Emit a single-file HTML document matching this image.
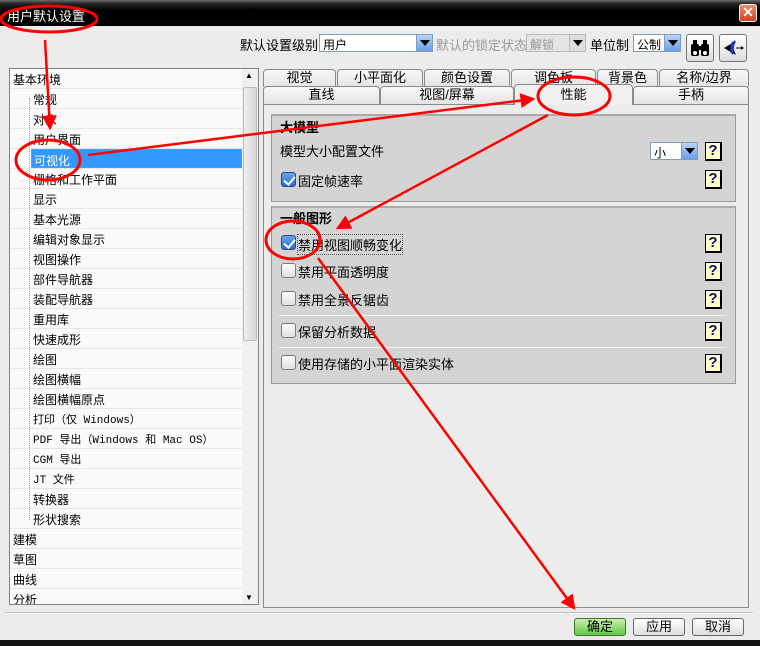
<!DOCTYPE html>
<html><head><meta charset="utf-8"><style>
*{box-sizing:border-box;margin:0;padding:0}
body{width:760px;height:646px;background:#ececec;position:relative;overflow:hidden;font-family:"Liberation Sans","Noto Sans CJK SC","WenQuanYi Zen Hei",sans-serif;font-size:12px;color:#000}
.a{position:absolute}
.title{left:0;top:0;width:760px;height:26px;background:linear-gradient(#6a6a6a,#222 15%,#000 40%,#000);color:#fff;font-size:13px;padding:6px 0 0 7px}
.close{left:739px;top:4px;width:18px;height:18px;background:linear-gradient(#f08a6a,#d04020);border:1px solid #fff;border-radius:3px;color:#fff;font-size:14px;line-height:15px;text-align:center;font-weight:bold}
.combo{background:#fff;border:1px solid #7f9db9;height:18px;padding:1px 3px}
.dd{position:absolute;right:0;top:0;width:16px;height:16px;background:linear-gradient(#b8d4f8,#6a9ee8);border-left:1px solid #7f9db9}
.dd:after{content:"";position:absolute;left:3px;top:5px;border-left:5px solid transparent;border-right:5px solid transparent;border-top:6px solid #000}
.tree{left:9px;top:68px;width:250px;height:537px;border:1px solid #828282;background:#fff;overflow:hidden}
.row{position:absolute;left:0;width:232px;height:20px;border-bottom:1px solid #e6e6e6;padding:2px 0 0 3px;font-size:12px;background:#fafafa}
.row.c{padding-left:23px}
.sb{position:absolute;right:0;top:0;width:16px;height:535px;background:#f0f0f0}
.tab{position:absolute;height:18px;border:1px solid #8a8a8a;border-bottom:none;border-radius:4px 4px 0 0;background:linear-gradient(#f8f8f8,#e4e4e4);text-align:center;font-size:13px;line-height:16px}
.panel{left:263px;top:104px;width:486px;height:504px;border:1px solid #8a8a8a;background:#ececec}
.grp{position:absolute;left:271px;width:465px;background:#d4d4d4;border:1px solid #999;border-top:2px solid #aaa}
.lbl{position:absolute;font-size:13px}
.cb{position:absolute;width:15px;height:15px;border:1px solid #7a7a7a;border-radius:3px;background:linear-gradient(#fff,#ddd)}
.cb.on{background:linear-gradient(#6aa6ee,#2a6ad6);border-color:#2a4a8a}
.cb.on:after{content:"";position:absolute;left:4px;top:1px;width:5px;height:9px;border:solid #fff;border-width:0 2px 2px 0;transform:rotate(40deg)}
.q{position:absolute;left:705px;width:17px;height:19px;background:#ffffcc;border:1px solid #000;border-width:1px 2px 2px 1px;color:#0a0a80;font-weight:bold;font-size:15px;line-height:16px;text-align:center}
.btn{position:absolute;top:618px;width:52px;height:18px;border:1px solid #666;border-radius:3px;background:linear-gradient(#fff,#ddd);text-align:center;font-size:13px;line-height:16px}
.ib{position:absolute;top:34px;width:28px;height:28px;border:1px solid #777;border-radius:3px;background:linear-gradient(#fff,#ddd)}
</style></head><body>
<div class="a title">用户默认设置</div>
<div class="a close">✕</div>

<div class="a" style="left:240px;top:35px;font-size:13px">默认设置级别</div>
<div class="a combo" style="left:319px;top:34px;width:114px">用户<div class="dd"></div></div>
<div class="a" style="left:436px;top:35px;font-size:13px;color:#999">默认的锁定状态</div>
<div class="a combo" style="left:526px;top:34px;width:60px;background:#e4e4e4;color:#999;border-color:#bbb">解锁<div class="dd" style="background:#ddd;border-color:#bbb"></div></div>
<div class="a" style="left:590px;top:35px;font-size:13px">单位制</div>
<div class="a combo" style="left:633px;top:34px;width:48px">公制<div class="dd"></div></div>
<div class="ib" style="left:686px"><svg width="26" height="26"><g fill="#000"><rect x="6" y="5" width="4" height="5"/><rect x="16" y="5" width="4" height="5"/><rect x="4" y="9" width="8" height="12" rx="2"/><rect x="14" y="9" width="8" height="12" rx="2"/><rect x="11" y="11" width="4" height="4"/></g><circle cx="8" cy="18" r="2" fill="#fff"/><circle cx="18" cy="18" r="2" fill="#fff"/></svg></div>
<div class="ib" style="left:719px"><svg width="26" height="26"><path d="M4 13 L16 6 L13 13 L16 20Z" fill="#000"/><path d="M11 8 L15 5 L13 20 L10 17Z" fill="#1a3ad0"/><line x1="16" y1="13" x2="23" y2="13" stroke="#000"/><path d="M21 11 L24 13 L21 15" fill="#000"/></svg></div>

<div class="a tree">
<div class="row" style="top:0">基本环境</div>
<div class="row c" style="top:20px">常规</div>
<div class="row c" style="top:40px">对象</div>
<div class="row c" style="top:60px">用户界面</div>
<div class="row c" style="top:80px;padding-left:0;background:transparent"><span style="position:absolute;left:21px;top:0;width:211px;height:19px;background:#3399ff;color:#fff;padding:2px 2px;border:1px dotted #c87">可视化</span></div>
<div class="row c" style="top:100px">栅格和工作平面</div>
<div class="row c" style="top:120px">显示</div>
<div class="row c" style="top:140px">基本光源</div>
<div class="row c" style="top:160px">编辑对象显示</div>
<div class="row c" style="top:180px">视图操作</div>
<div class="row c" style="top:200px">部件导航器</div>
<div class="row c" style="top:220px">装配导航器</div>
<div class="row c" style="top:240px">重用库</div>
<div class="row c" style="top:260px">快速成形</div>
<div class="row c" style="top:280px">绘图</div>
<div class="row c" style="top:300px">绘图横幅</div>
<div class="row c" style="top:320px">绘图横幅原点</div>
<div class="row c" style="top:340px;font-family:'Liberation Mono','Noto Sans CJK SC',monospace;font-size:11px">打印（仅 Windows）</div>
<div class="row c" style="top:360px;font-family:'Liberation Mono','Noto Sans CJK SC',monospace;font-size:11px">PDF 导出（Windows 和 Mac OS）</div>
<div class="row c" style="top:380px;font-family:'Liberation Mono','Noto Sans CJK SC',monospace;font-size:11px">CGM 导出</div>
<div class="row c" style="top:400px;font-family:'Liberation Mono','Noto Sans CJK SC',monospace;font-size:11px">JT 文件</div>
<div class="row c" style="top:420px">转换器</div>
<div class="row c" style="top:440px">形状搜索</div>
<div class="row" style="top:460px">建模</div>
<div class="row" style="top:480px">草图</div>
<div class="row" style="top:500px">曲线</div>
<div class="row" style="top:520px">分析</div>
<div class="a" style="left:19px;top:29px;height:422px;border-left:1px dotted #999"></div>
<div class="sb"><div style="position:absolute;left:1px;top:18px;width:14px;height:254px;background:linear-gradient(90deg,#eee,#d8d8d8);border:1px solid #bbb;border-radius:2px"></div><div style="position:absolute;left:3px;top:2px;font-size:8px">▲</div><div style="position:absolute;left:3px;bottom:2px;font-size:8px">▼</div></div>
</div>

<div class="tab" style="left:263px;top:69px;width:73px">视觉</div>
<div class="tab" style="left:337px;top:69px;width:86px">小平面化</div>
<div class="tab" style="left:424px;top:69px;width:86px">颜色设置</div>
<div class="tab" style="left:511px;top:69px;width:85px">调色板</div>
<div class="tab" style="left:597px;top:69px;width:61px">背景色</div>
<div class="tab" style="left:659px;top:69px;width:90px">名称/边界</div>
<div class="tab" style="left:263px;top:86px;width:117px">直线</div>
<div class="tab" style="left:380px;top:86px;width:134px">视图/屏幕</div>
<div class="tab" style="left:633px;top:86px;width:116px">手柄</div>
<div class="a panel"></div>
<div class="tab" style="left:514px;top:84px;width:119px;height:21px;background:#f0f0f0;z-index:2;line-height:20px">性能</div>

<div class="grp" style="top:114px;height:88px"></div>
<div class="lbl" style="left:280px;top:117px;font-weight:bold">大模型</div>
<div class="lbl" style="left:280px;top:141px">模型大小配置文件</div>
<div class="a combo" style="left:650px;top:142px;width:48px">小<div class="dd"></div></div>
<div class="q" style="top:142px">?</div>
<div class="cb on" style="left:281px;top:172px"></div>
<div class="lbl" style="left:298px;top:171px">固定帧速率</div>
<div class="q" style="top:170px">?</div>

<div class="grp" style="top:206px;height:178px"></div>
<div class="lbl" style="left:280px;top:208px;font-weight:bold">一般图形</div>
<div class="cb on" style="left:281px;top:235px"></div>
<div class="lbl" style="left:297px;top:234px;border:1px dotted #555">禁用视图顺畅变化</div>
<div class="q" style="top:234px">?</div>
<div class="cb" style="left:281px;top:263px"></div>
<div class="lbl" style="left:298px;top:262px">禁用平面透明度</div>
<div class="q" style="top:262px">?</div>
<div class="cb" style="left:281px;top:291px"></div>
<div class="lbl" style="left:298px;top:290px">禁用全景反锯齿</div>
<div class="q" style="top:290px">?</div>
<div class="a" style="left:279px;top:315px;width:448px;border-top:1px solid #f4f4f4"></div>
<div class="cb" style="left:281px;top:323px"></div>
<div class="lbl" style="left:298px;top:322px">保留分析数据</div>
<div class="q" style="top:322px">?</div>
<div class="a" style="left:279px;top:347px;width:448px;border-top:1px solid #f4f4f4"></div>
<div class="cb" style="left:281px;top:355px"></div>
<div class="lbl" style="left:298px;top:354px">使用存储的小平面渲染实体</div>
<div class="q" style="top:354px">?</div>

<div class="a" style="left:5px;top:612px;width:748px;border-top:1px solid #bbb;border-bottom:1px solid #fff"></div>
<div class="btn" style="left:574px;background:linear-gradient(#c8f0b0,#60c840);border-color:#3a7a2a">确定</div>
<div class="btn" style="left:633px">应用</div>
<div class="btn" style="left:692px">取消</div>
<div class="a" style="left:0;top:640px;width:760px;height:6px;background:#111"></div>

<svg class="a" style="left:0;top:0;z-index:5" width="760" height="646">
<defs><marker id="m" markerWidth="6" markerHeight="6" refX="5" refY="3" orient="auto" markerUnits="strokeWidth"><path d="M0,0 L6,3 L0,6z" fill="#f00"/></marker></defs>
<g fill="none" stroke="#f00" stroke-width="3">
<ellipse cx="49" cy="19" rx="48" ry="13"/>
<line x1="45" y1="40" x2="50" y2="128" marker-end="url(#m)" stroke-width="2.5"/>
<ellipse cx="48" cy="160" rx="32" ry="20"/>
<line x1="88" y1="155" x2="533" y2="99" marker-end="url(#m)" stroke-width="2.5"/>
<ellipse cx="574" cy="96" rx="36" ry="19"/>
<line x1="548" y1="115" x2="338" y2="228" marker-end="url(#m)" stroke-width="2.5"/>
<ellipse cx="293" cy="240" rx="27" ry="19"/>
<line x1="318" y1="258" x2="574" y2="608" marker-end="url(#m)" stroke-width="2.5"/>
</g></svg>
</body></html>
